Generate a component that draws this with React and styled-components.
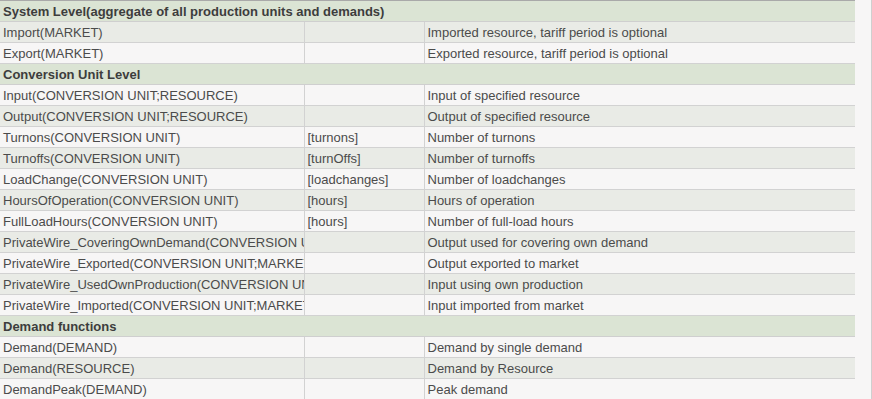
import React from "react";
import styled, { createGlobalStyle } from "styled-components";

const Global = createGlobalStyle`
  html, body { margin: 0; padding: 0; background: #f7f6f6; }
  body { font-family: "Liberation Sans", Arial, sans-serif; }
`;

const Page = styled.div`
  width: 871px;
  height: 399px;
  border-right: 1px solid #cfcfcf;
  background: #f7f6f6;
  overflow: hidden;
`;

const Table = styled.table`
  width: 855px;
  table-layout: fixed;
  border-collapse: collapse;
  border-top: 1px solid #a9a9a9;
  font-size: 13px;
  color: #4b4b4b;
`;

const Row = styled.tr`
  background: ${(p) => (p.$alt ? "#e9ebe6" : "#f7f6f6")};
`;

const SectionRow = styled.tr`
  background: #dbe4d4;
`;

const SectionCell = styled.td`
  height: 20px;
  padding: 0 3px;
  border-bottom: 1px solid #cfcfcf;
  font-weight: bold;
  color: #3d3d3d;
  white-space: nowrap;
  vertical-align: middle;
`;

const Cell = styled.td`
  height: 20px;
  padding: 0 3px;
  border-bottom: 1px solid #d2d2d2;
  border-right: ${(p) => (p.$last ? "none" : "1px solid #d2d2d2")};
  white-space: nowrap;
  overflow: hidden;
  vertical-align: middle;
`;

const data = [
  { section: "System Level(aggregate of all production units and demands)" },
  ["Import(MARKET)", "", "Imported resource, tariff period is optional"],
  ["Export(MARKET)", "", "Exported resource, tariff period is optional"],
  { section: "Conversion Unit Level" },
  ["Input(CONVERSION UNIT;RESOURCE)", "", "Input of specified resource"],
  ["Output(CONVERSION UNIT;RESOURCE)", "", "Output of specified resource"],
  ["Turnons(CONVERSION UNIT)", "[turnons]", "Number of turnons"],
  ["Turnoffs(CONVERSION UNIT)", "[turnOffs]", "Number of turnoffs"],
  ["LoadChange(CONVERSION UNIT)", "[loadchanges]", "Number of loadchanges"],
  ["HoursOfOperation(CONVERSION UNIT)", "[hours]", "Hours of operation"],
  ["FullLoadHours(CONVERSION UNIT)", "[hours]", "Number of full-load hours"],
  ["PrivateWire_CoveringOwnDemand(CONVERSION UNIT)", "", "Output used for covering own demand"],
  ["PrivateWire_Exported(CONVERSION UNIT;MARKET)", "", "Output exported to market"],
  ["PrivateWire_UsedOwnProduction(CONVERSION UNIT)", "", "Input using own production"],
  ["PrivateWire_Imported(CONVERSION UNIT;MARKET)", "", "Input imported from market"],
  { section: "Demand functions" },
  ["Demand(DEMAND)", "", "Demand by single demand"],
  ["Demand(RESOURCE)", "", "Demand by Resource"],
  ["DemandPeak(DEMAND)", "", "Peak demand"],
];

export default function App() {
  return (
    <Page>
      <Global />
      <Table>
        <colgroup>
          <col style={{ width: 304 }} />
          <col style={{ width: 120 }} />
          <col />
        </colgroup>
        <tbody>
          {data.map((r, i) =>
            r.section ? (
              <SectionRow key={i}>
                <SectionCell colSpan={3}>{r.section}</SectionCell>
              </SectionRow>
            ) : (
              <Row key={i} $alt={i % 2 === 1}>
                <Cell>{r[0]}</Cell>
                <Cell>{r[1]}</Cell>
                <Cell $last>{r[2]}</Cell>
              </Row>
            )
          )}
        </tbody>
      </Table>
    </Page>
  );
}
